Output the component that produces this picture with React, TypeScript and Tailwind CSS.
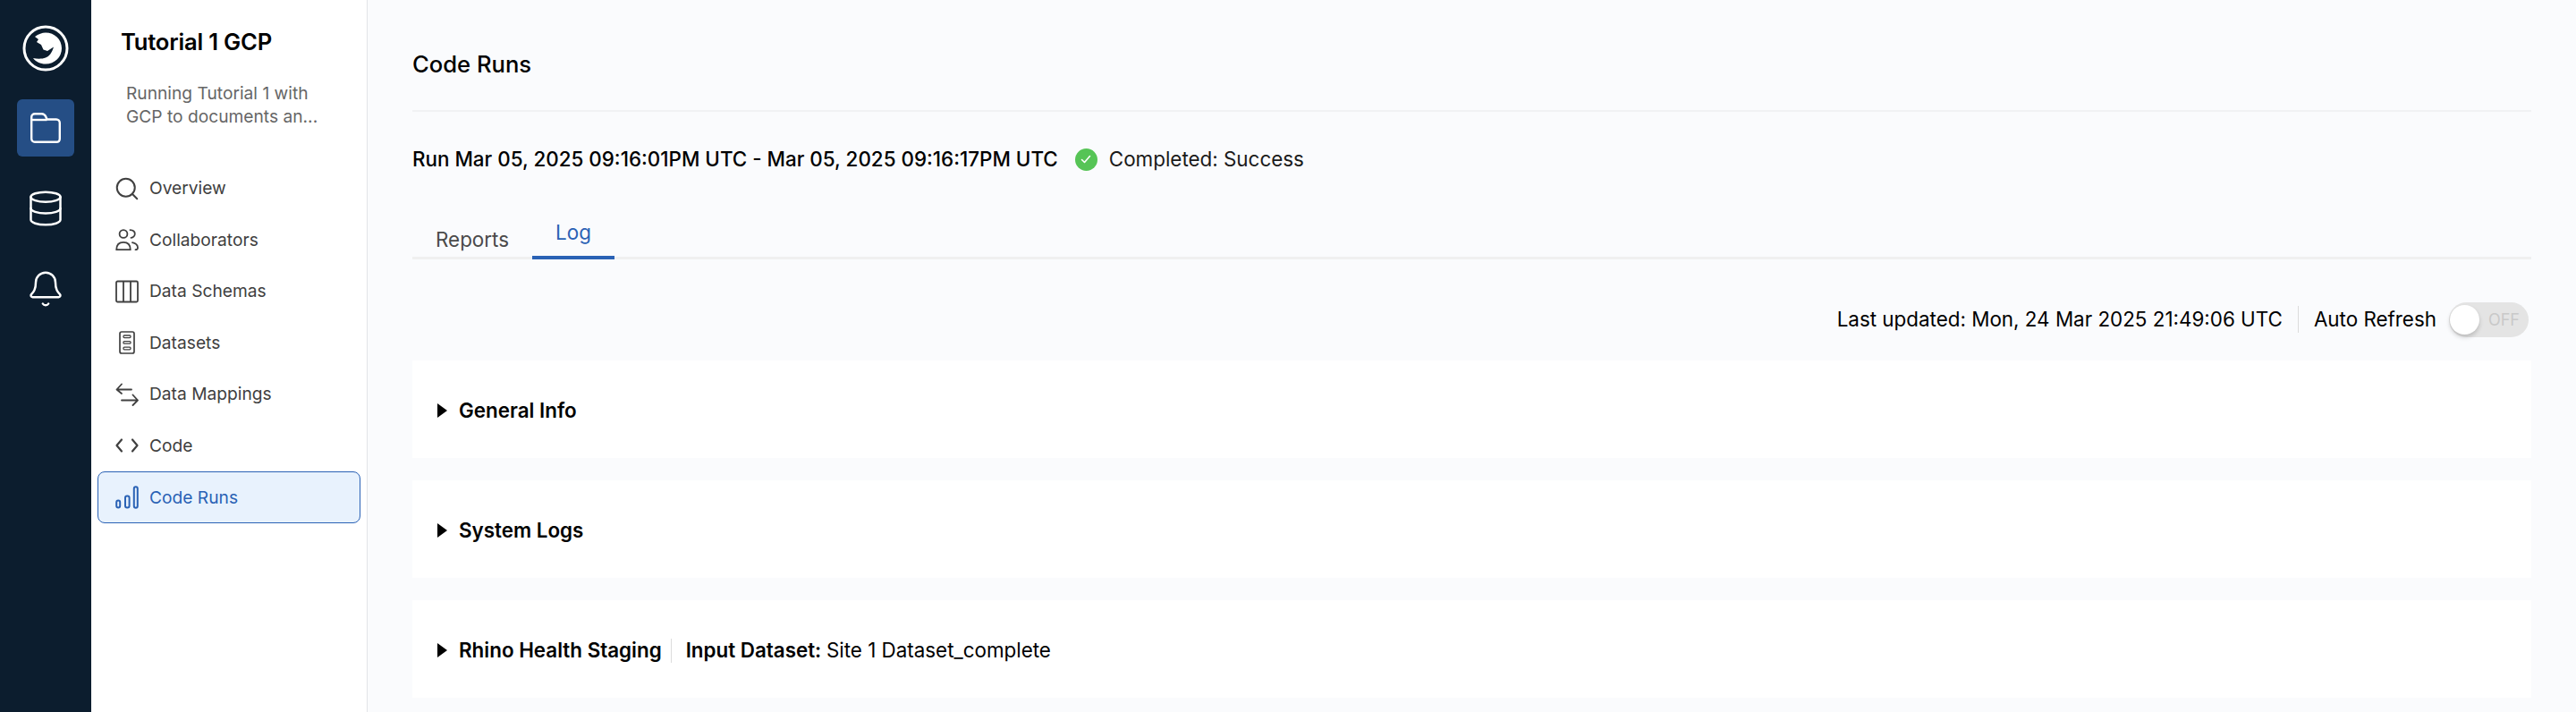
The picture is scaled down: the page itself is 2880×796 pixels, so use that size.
import { useState } from 'react';
import { Bell, Database, Search } from 'lucide-react';

function RhinoLogo() {
  return (
    <svg viewBox="0 0 52 52" className="h-[52px] w-[52px]" fill="none">
      <circle cx="26" cy="26" r="24" stroke="white" strokeWidth="3" />
      <path
        d="M14 13 C18 10 22 8.5 26 8.5 C36 8.5 44 16 44 26 C44 36 36 43.5 26 43.5 C20 43.5 15 41 12 37 C17 38 22 38 26 36.5 C30 35 33 31 35 24.5 L28 29 L23.5 27.5 L21 22 L16 19 L18 16 Z"
        fill="white"
      />
    </svg>
  );
}

function FolderIcon() {
  return (
    <svg viewBox="0 0 34 34" className="h-[34px] w-[34px]" fill="none" stroke="white" strokeWidth="2.4" strokeLinejoin="round">
      <path d="M1.2 5 C1.2 2.8 2.8 1.2 5 1.2 H12.5 C15 1.2 16.5 2.5 17.5 5 L18.5 7.5 H29 C31.2 7.5 32.8 9.2 32.8 11.5 V29 C32.8 31.2 31.2 32.8 29 32.8 H5 C2.8 32.8 1.2 31.2 1.2 29 Z" />
      <path d="M1.2 8 H18.5" />
    </svg>
  );
}

function PeopleIcon() {
  return (
    <svg viewBox="0 0 26 26" className="h-[26px] w-[26px]" fill="none" stroke="#404040" strokeWidth="1.8" strokeLinecap="round" strokeLinejoin="round">
      <circle cx="9" cy="6.5" r="4.4" />
      <path d="M1.2 24.2 C1.2 18.5 4.5 15.8 9 15.8 C13.5 15.8 16.8 18.5 16.8 24.2 Z" />
      <path d="M16.5 2.2 C20 2.5 21.8 4.5 21.8 6.5 C21.8 8.5 20 10.5 17.5 10.8" />
      <path d="M19 16.2 C22.8 17 25 19.6 25 22 C25 23.4 24 24.2 22.5 24.2" />
    </svg>
  );
}

function ColumnsIcon() {
  return (
    <svg viewBox="0 0 26 26" className="h-[26px] w-[26px]" fill="none" stroke="#404040" strokeWidth="1.8">
      <rect x="1" y="1.5" width="24" height="23" rx="1.5" />
      <path d="M9 1.5 V24.5 M17 1.5 V24.5" />
    </svg>
  );
}

function DatasetIcon() {
  return (
    <svg viewBox="0 0 26 26" className="h-[26px] w-[26px]" fill="none" stroke="#404040" strokeWidth="1.7">
      <rect x="5" y="1" width="16" height="24" rx="2" />
      <rect x="9" y="5" width="8" height="2.6" rx="1" strokeWidth="1.3" />
      <rect x="9" y="11.6" width="8" height="2.6" rx="1" strokeWidth="1.3" />
      <rect x="9" y="18.2" width="8" height="2.6" rx="1" strokeWidth="1.3" />
    </svg>
  );
}

function MappingIcon() {
  return (
    <svg viewBox="0 0 26 26" className="h-[26px] w-[26px]" fill="none" stroke="#404040" strokeWidth="1.8" strokeLinecap="round" strokeLinejoin="round">
      <path d="M1.5 7.5 H18 M7 1.5 L1.5 7.5 L7 12" />
      <path d="M7 19.5 H25 M19.5 13.5 L25 19.5 L19.5 25" />
    </svg>
  );
}

function CodeIcon() {
  return (
    <svg viewBox="0 0 26 26" className="h-[26px] w-[26px]" fill="none" stroke="#404040" strokeWidth="2.2" strokeLinecap="round" strokeLinejoin="round">
      <path d="M7 6.5 L1.5 13 L7 19.5" />
      <path d="M19 6.5 L24.5 13 L19 19.5" />
    </svg>
  );
}

function BarsIcon() {
  return (
    <svg viewBox="0 0 26 26" className="h-[26px] w-[26px]" fill="none" stroke="#2a62b5" strokeWidth="2">
      <rect x="1.2" y="16.5" width="4" height="8" rx="2" />
      <rect x="11" y="11.5" width="4.6" height="13" rx="2" />
      <rect x="20.8" y="1.2" width="4" height="23.5" rx="2" />
    </svg>
  );
}

const sideItems = [
  { label: 'Overview', icon: <Search size={30} strokeWidth={1.6} color="#404040" className="-ml-[2px]" /> },
  { label: 'Collaborators', icon: <PeopleIcon /> },
  { label: 'Data Schemas', icon: <ColumnsIcon /> },
  { label: 'Datasets', icon: <DatasetIcon /> },
  { label: 'Data Mappings', icon: <MappingIcon /> },
  { label: 'Code', icon: <CodeIcon /> },
];

function Section({ children }: { children: React.ReactNode }) {
  return (
    <div className="flex h-[109px] items-center gap-[13px] bg-white pt-[3px] pl-[28px] text-[22.4px] leading-none font-semibold text-black">
      <span className="h-0 w-0 border-y-[8px] border-l-[11px] border-y-transparent border-l-black" />
      {children}
    </div>
  );
}

export default function App() {
  const [tab, setTab] = useState('Log');

  return (
    <div className="flex h-[796px] overflow-hidden bg-[#fafbfd] font-['Inter',sans-serif]">
      <nav className="flex w-[102px] shrink-0 flex-col items-center bg-[#0c1d2e] pt-[28px]">
        <RhinoLogo />
        <div className="mt-[31px] flex h-[64px] w-[64px] items-center justify-center rounded-[6px] bg-[#254e85]">
          <FolderIcon />
        </div>
        <div className="mt-[26px] flex h-[64px] w-[64px] items-center justify-center">
          <Database size={44} strokeWidth={1.35} color="white" />
        </div>
        <div className="mt-[26px] flex h-[64px] w-[64px] items-center justify-center">
          <Bell size={44} strokeWidth={1.35} color="white" />
        </div>
      </nav>

      <aside className="flex w-[309px] shrink-0 flex-col border-r border-[#e2e4e8] bg-white">
        <h2 className="mt-[32px] ml-[33px] text-[25.6px] leading-[29px] font-semibold tracking-[-0.2px] text-black">Tutorial 1 GCP</h2>
        <p className="mt-[30px] ml-[39px] w-[235px] text-[19.2px] leading-[26px] text-[#666666]">
          Running Tutorial 1 with GCP to documents an...
        </p>
        <ul className="mt-[39px] flex flex-col pl-[7px]">
          {sideItems.map((item) => (
            <li key={item.label} className="flex h-[57.5px] items-center pl-[20px] text-[19.2px] text-[#404040]">
              <span className="flex w-[38px] shrink-0 items-center">{item.icon}</span>
              {item.label}
            </li>
          ))}
          <li className="flex h-[58px] w-[294px] items-center rounded-[8px] border border-[#2a62b5] bg-[#e8f2fd] pl-[19px] text-[19.2px] text-[#2a62b5]">
            <span className="flex w-[38px] shrink-0 items-center"><BarsIcon /></span>
            Code Runs
          </li>
        </ul>
      </aside>

      <main className="min-w-0 flex-1 pr-[50px] pl-[50px]">
        <h1 className="flex h-[123px] items-start pt-[57px] text-[25.6px] leading-[29px] font-medium text-black">Code Runs</h1>
        <div className="border-t-2 border-[#f1f2f4]" />
        <div className="mt-[40px] flex items-center text-[22.4px] leading-[26px] font-medium text-black">
          Run Mar 05, 2025 09:16:01PM UTC - Mar 05, 2025 09:16:17PM UTC
          <span className="mr-[13px] ml-[19px] flex h-[25px] w-[25px] items-center justify-center rounded-full bg-[#56c456]">
            <svg viewBox="0 0 14 14" className="h-[14px] w-[14px]" fill="none" stroke="white" strokeWidth="1.6" strokeLinecap="round" strokeLinejoin="round">
              <path d="M2.5 7.5 L5.5 10.5 L11.5 3.5" />
            </svg>
          </span>
          <span className="font-normal text-[#1a1a1a]">Completed: Success</span>
        </div>
        <div className="mt-[49px] flex h-[50px] border-b-3 border-[#f0f0f0]">
          {['Reports', 'Log'].map((name) =>
            name === tab ? (
              <button key={name} onClick={() => setTab(name)} className="mb-[-3px] h-[50px] w-[92px] border-b-4 border-[#2a62b5] pb-[6px] text-[22.4px] leading-[26px] text-[#2a62b5]">
                {name}
              </button>
            ) : (
              <button key={name} onClick={() => setTab(name)} className="h-[50px] w-[134px] pt-[5px] text-[22.4px] leading-[26px] text-[#4a4a4a]">
                {name}
              </button>
            ),
          )}
        </div>
        <div className="mt-[47px] flex h-[40px] items-center justify-end text-[22.4px] text-black">
          <span>Last updated: Mon, 24 Mar 2025 21:49:06 UTC</span>
          <span className="mx-[17px] h-[30px] w-px bg-[#dcdcdc]" />
          <span>Auto Refresh</span>
          <span className="relative mr-[3px] ml-[14px] flex h-[39px] w-[89px] items-center justify-end rounded-full bg-[#e4e4e4] pr-[10px] text-[18px] text-[#c9c9c9]">
            OFF
            <span className="absolute top-[3px] left-[1px] h-[33px] w-[33px] rounded-full bg-white shadow-[0_3px_5px_rgba(0,0,0,0.18)]" />
          </span>
        </div>
        <div className="mt-[26px] flex flex-col gap-[25px]">
          <Section>General Info</Section>
          <Section>System Logs</Section>
          <Section>
            Rhino Health Staging
            <span className="mr-[3px] ml-[-3px] h-[27px] w-px bg-[#dcdcdc]" />
            <span>Input Dataset: <span className="font-normal">Site 1 Dataset_complete</span></span>
          </Section>
        </div>
      </main>
    </div>
  );
}
